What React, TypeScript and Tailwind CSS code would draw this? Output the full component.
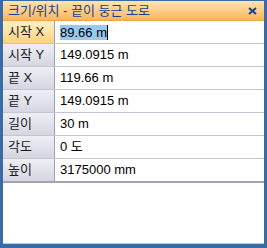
import React from "react";

type Row = { label: string; value: string };

const rows: Row[] = [
  { label: "시작 X", value: "89.66 m" },
  { label: "시작 Y", value: "149.0915 m" },
  { label: "끝 X", value: "119.66 m" },
  { label: "끝 Y", value: "149.0915 m" },
  { label: "길이", value: "30 m" },
  { label: "각도", value: "0 도" },
  { label: "높이", value: "3175000 mm" },
];

export default function App() {
  return (
    <div
      className="w-[267px] h-[248px] bg-[#3b6ba5] pt-px pl-[3px] pr-[3px] pb-[4px] flex flex-col"
      style={{ fontFamily: '"Liberation Sans", "Noto Sans CJK KR", sans-serif' }}
    >
      {/* Title bar */}
      <div className="h-[20px] shrink-0 flex items-center justify-between pl-[5px] pr-[7px] bg-gradient-to-b from-[#fde3b4] to-[#fbb55a] border-b border-[#f2a64a]">
        <span className="text-[13px] leading-none text-[#15428b]">크기/위치 - 끝이 둥근 도로</span>
        <svg width="9" height="8" viewBox="0 0 9 8" className="mt-px">
          <path d="M1 1 L8 7 M8 1 L1 7" stroke="#15428b" strokeWidth="2" />
        </svg>
      </div>

      {/* Grid */}
      <div className="flex-1 bg-white flex flex-col border-b border-[#a9cdf3]">
        <div className="flex flex-col border-b-2 border-[#a3a3b8]">
          {rows.map((r, i) => {
            const sel = i === 0;
            return (
              <div key={r.label} className={`flex ${i > 0 ? "h-[23px] border-t border-[#c4c4d4]" : "h-[22px]"}`}>
                <div
                  className={`w-[52px] shrink-0 flex items-center pl-[5px] text-[13px] text-[#1a1a1a] border-r border-[#9d9db3] bg-gradient-to-b ${
                    sel ? "from-[#fdf0c8] to-[#fcd27a]" : "from-[#eeeef4] to-[#d6d6e2]"
                  }`}
                >
                  {r.label}
                </div>
                <div className="flex-1 flex items-center pl-[5px] text-[13px] text-black">
                  {sel ? (
                    <span className="flex items-center">
                      <span className="bg-[#99c9ef] leading-[15px]">{r.value}</span>
                      <span className="w-px h-[15px] bg-black" />
                    </span>
                  ) : (
                    r.value
                  )}
                </div>
              </div>
            );
          })}
        </div>
      </div>
    </div>
  );
}
